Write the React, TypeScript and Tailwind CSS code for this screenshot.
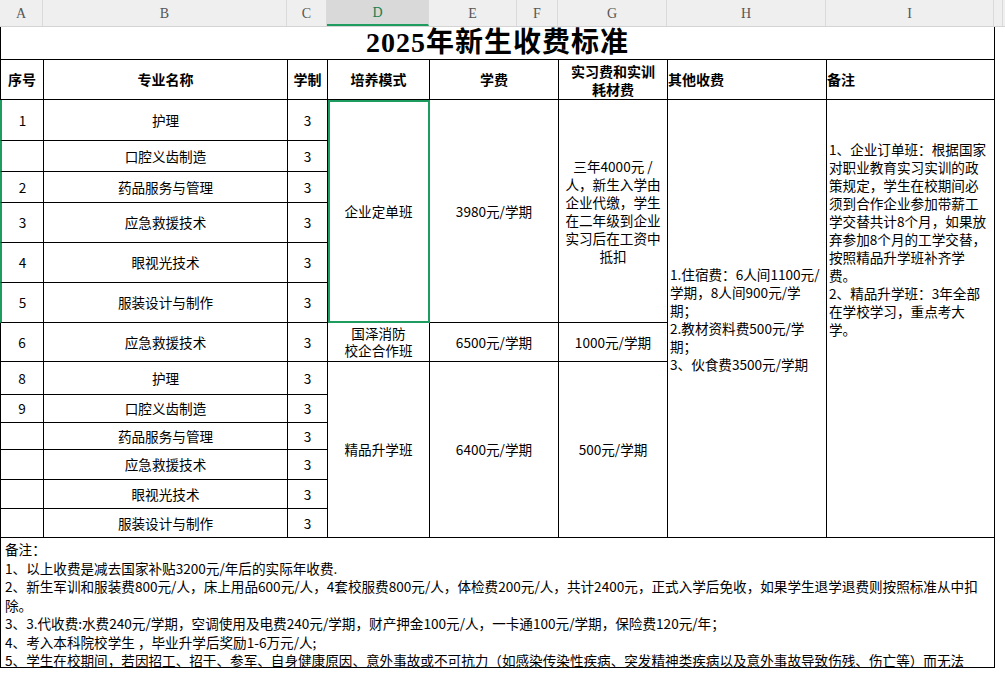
const F = { fontFamily: '"Noto Sans CJK SC", "Liberation Sans", sans-serif' };
const cell = "border-r border-b border-black flex items-center justify-center text-center";
const rows = [
  ["1", "护理"], ["", "口腔义齿制造"], ["2", "药品服务与管理"], ["3", "应急救援技术"], ["4", "眼视光技术"], ["5", "服装设计与制作"],
  ["6", "应急救援技术"], ["8", "护理"], ["9", "口腔义齿制造"], ["", "药品服务与管理"], ["", "应急救援技术"], ["", "眼视光技术"], ["", "服装设计与制作"],
];
const rs = ["row-start-3","row-start-4","row-start-5","row-start-6","row-start-7","row-start-8","row-start-9","row-start-10","row-start-11","row-start-12","row-start-13","row-start-14","row-start-15"];
export default function App() {
  return (
    <div className="w-[1005px] h-[679px] overflow-hidden bg-white text-[13.6px] text-black" style={F}>
      <div className="grid grid-cols-[43px_244px_40px_102px_88px_41px_109px_159px_168px_9px] h-[27px] bg-[#efefef] text-[#555] border-b border-[#d4d4d4]" style={{ fontFamily: '"Liberation Serif", serif' }}>
        {["A","B","C","D","E","F","G","H","I",""].map((c, i) => (
          <div key={i} className={`flex items-center justify-center border-r border-[#dadada] text-[14px] ${c === "D" ? "bg-[#d9d9d9] text-[#1a7f50] border-b-2 border-b-[#1e9c5f]" : ""}`}>{c}</div>
        ))}
      </div>
      <div className="grid grid-cols-[43px_244px_40px_102px_88px_41px_109px_159px_168px] grid-rows-[33px_40px_41px_31px_31px_40px_40px_40px_39px_33px_28px_27px_30px_29px_29px_130px] border-l border-black w-[995px]">
        <div className="col-span-9 row-start-1 border-r border-b border-black flex items-center justify-center text-[28px] font-semibold tracking-[1px]" style={{ fontFamily: '"Liberation Serif", "Noto Sans CJK SC", serif' }}>2025年新生收费标准</div>
        <div className={`${cell} row-start-2 font-bold text-[14px]`}>序号</div>
        <div className={`${cell} row-start-2 font-bold text-[14px]`}>专业名称</div>
        <div className={`${cell} row-start-2 font-bold text-[14px]`}>学制</div>
        <div className={`${cell} row-start-2 font-bold text-[14px]`}>培养模式</div>
        <div className={`${cell} row-start-2 col-span-2 font-bold text-[14px]`}>学费</div>
        <div className={`${cell} row-start-2 font-bold text-[14px] leading-[18px]`}>实习费和实训<br />耗材费</div>
        <div className={`${cell} row-start-2 font-bold text-[14px] !justify-start`}>其他收费</div>
        <div className={`${cell} row-start-2 font-bold text-[14px] !justify-start`}>备注</div>
        {rows.map((r, i) => (
          <div key={i} className="contents">
            <div className={`${cell} ${rs[i]} col-start-1 ${i < 6 ? "border-l-2 border-l-[#1e9c5f] -ml-px" : ""}`}>{r[0]}</div>
            <div className={`${cell} ${rs[i]} col-start-2`}>{r[1]}</div>
            <div className={`${cell} ${rs[i]} col-start-3`}>3</div>
          </div>
        ))}
        <div className={`${cell} row-start-3 row-span-6 col-start-4 outline-2 outline-[#1e9c5f] -outline-offset-2`}>企业定单班</div>
        <div className={`${cell} row-start-3 row-span-6 col-start-5 col-span-2`}>3980元/学期</div>
        <div className={`${cell} row-start-3 row-span-6 col-start-7 leading-[18px] px-[5px]`}>三年4000元 /人，新生入学由企业代缴，学生在二年级到企业实习后在工资中抵扣</div>
        <div className={`${cell} row-start-3 row-span-13 col-start-8 !justify-start !text-left leading-[18px] pl-[2px] pr-1`}>1.住宿费：6人间1100元/学期，8人间900元/学期；<br />2.教材资料费500元/学期；<br />3、伙食费3500元/学期</div>
        <div className={`border-r border-b border-black row-start-3 row-span-13 col-start-9 leading-[18px] pl-[2px] pr-1 pt-[40px]`}>1、企业订单班：根据国家对职业教育实习实训的政策规定，学生在校期间必须到合作企业参加带薪工学交替共计8个月，如果放弃参加8个月的工学交替，按照精品升学班补齐学费。<br />2、精品升学班：3年全部在学校学习，重点考大学。</div>
        <div className={`${cell} row-start-9 col-start-4 leading-[17px]`}>国泽消防<br />校企合作班</div>
        <div className={`${cell} row-start-9 col-start-5 col-span-2`}>6500元/学期</div>
        <div className={`${cell} row-start-9 col-start-7`}>1000元/学期</div>
        <div className={`${cell} row-start-10 row-span-6 col-start-4`}>精品升学班</div>
        <div className={`${cell} row-start-10 row-span-6 col-start-5 col-span-2`}>6400元/学期</div>
        <div className={`${cell} row-start-10 row-span-6 col-start-7`}>500元/学期</div>
        <div className="row-start-16 col-span-9 border-r border-b border-black leading-[18.5px] pl-[4px] pt-[2px] whitespace-nowrap overflow-hidden">
          <div>备注：</div>
          <div>1、以上收费是减去国家补贴3200元/年后的实际年收费.</div>
          <div className="whitespace-normal pr-2">2、新生军训和服装费800元/人，床上用品600元/人，4套校服费800元/人，体检费200元/人，共计2400元，正式入学后免收，如果学生退学退费则按照标准从中扣除。</div>
          <div>3、3.代收费:水费240元/学期，空调使用及电费240元/学期，财产押金100元/人，一卡通100元/学期，保险费120元/年；</div>
          <div>4、考入本科院校学生 ，毕业升学后奖励1-6万元/人;</div>
          <div>5、学生在校期间，若因招工、招干、参军、自身健康原因、意外事故或不可抗力（如感染传染性疾病、突发精神类疾病以及意外事故导致伤残、伤亡等）而无法</div>
        </div>
      </div>
    </div>
  );
}
